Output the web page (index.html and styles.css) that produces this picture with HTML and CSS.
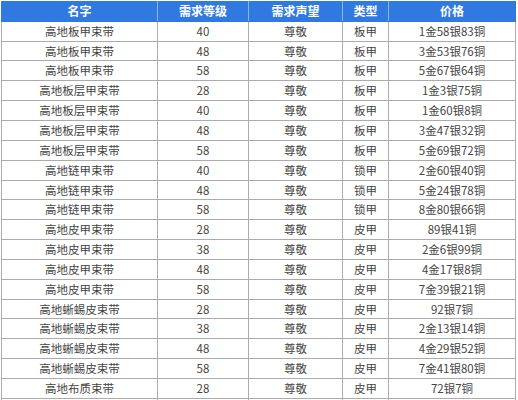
FILE: index.html
```html
<!DOCTYPE html>
<html lang="zh">
<head>
<meta charset="utf-8">
<link rel="stylesheet" href="styles.css">
</head>
<body>
<table class="price-table">
  <colgroup>
    <col class="c1"><col class="c2"><col class="c3"><col class="c4"><col class="c5">
  </colgroup>
  <thead>
    <tr><th>名字</th><th>需求等级</th><th>需求声望</th><th>类型</th><th>价格</th></tr>
  </thead>
  <tbody>
    <tr><td>高地板甲束带</td><td>40</td><td>尊敬</td><td>板甲</td><td>1金58银83铜</td></tr>
    <tr><td>高地板甲束带</td><td>48</td><td>尊敬</td><td>板甲</td><td>3金53银76铜</td></tr>
    <tr><td>高地板甲束带</td><td>58</td><td>尊敬</td><td>板甲</td><td>5金67银64铜</td></tr>
    <tr><td>高地板层甲束带</td><td>28</td><td>尊敬</td><td>板甲</td><td>1金3银75铜</td></tr>
    <tr><td>高地板层甲束带</td><td>40</td><td>尊敬</td><td>板甲</td><td>1金60银8铜</td></tr>
    <tr><td>高地板层甲束带</td><td>48</td><td>尊敬</td><td>板甲</td><td>3金47银32铜</td></tr>
    <tr><td>高地板层甲束带</td><td>58</td><td>尊敬</td><td>板甲</td><td>5金69银72铜</td></tr>
    <tr><td>高地链甲束带</td><td>40</td><td>尊敬</td><td>锁甲</td><td>2金60银40铜</td></tr>
    <tr><td>高地链甲束带</td><td>48</td><td>尊敬</td><td>锁甲</td><td>5金24银78铜</td></tr>
    <tr><td>高地链甲束带</td><td>58</td><td>尊敬</td><td>锁甲</td><td>8金80银66铜</td></tr>
    <tr><td>高地皮甲束带</td><td>28</td><td>尊敬</td><td>皮甲</td><td>89银41铜</td></tr>
    <tr><td>高地皮甲束带</td><td>38</td><td>尊敬</td><td>皮甲</td><td>2金6银99铜</td></tr>
    <tr><td>高地皮甲束带</td><td>48</td><td>尊敬</td><td>皮甲</td><td>4金17银8铜</td></tr>
    <tr><td>高地皮甲束带</td><td>58</td><td>尊敬</td><td>皮甲</td><td>7金39银21铜</td></tr>
    <tr><td>高地蜥蜴皮束带</td><td>28</td><td>尊敬</td><td>皮甲</td><td>92银7铜</td></tr>
    <tr><td>高地蜥蜴皮束带</td><td>38</td><td>尊敬</td><td>皮甲</td><td>2金13银14铜</td></tr>
    <tr><td>高地蜥蜴皮束带</td><td>48</td><td>尊敬</td><td>皮甲</td><td>4金29银52铜</td></tr>
    <tr><td>高地蜥蜴皮束带</td><td>58</td><td>尊敬</td><td>皮甲</td><td>7金41银80铜</td></tr>
    <tr><td>高地布质束带</td><td>28</td><td>尊敬</td><td>皮甲</td><td>72银7铜</td></tr>
    <tr class="blank"><td></td><td></td><td></td><td></td><td></td></tr>
  </tbody>
</table>
</body>
</html>
```
FILE: styles.css
```css
html, body {
  margin: 0;
  padding: 0;
  background: #ffffff;
}
body {
  padding: 1px 0 0 1px;
  font-family: "Noto Sans CJK SC", "Noto Sans", sans-serif;
  font-size: 11.5px;
  color: #454545;
}
.price-table {
  border-collapse: collapse;
  table-layout: fixed;
  width: 514px;
}
.c1 { width: 156px; }
.c2 { width: 91px; }
.c3 { width: 94px; }
.c4 { width: 46px; }
.c5 { width: 127px; }
.price-table th {
  background: #3079e0;
  color: #ffffff;
  font-weight: bold;
  font-size: 12px;
  height: 18.8px;
  padding: 0;
  line-height: 18.8px;
  border: 1px solid #3079e0;
  border-right-color: #8fb3e6;
}
.price-table th:last-child {
  border-right-color: #3079e0;
}
.price-table td {
  height: 18.85px;
  padding: 0;
  line-height: 18.85px;
  text-align: center;
  border: 1px solid #ababab;
  white-space: nowrap;
}
```
